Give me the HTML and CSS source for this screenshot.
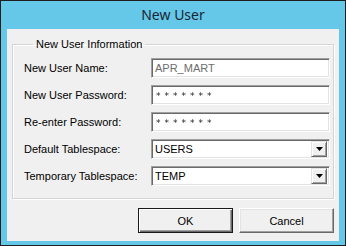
FILE: index.html
```html
<!DOCTYPE html>
<html>
<head>
<meta charset="utf-8">
<link rel="stylesheet" href="styles.css">
</head>
<body>
<div class="window">
  <div class="titlebar">New User</div>
  <div class="client">
    <fieldset class="group">
      <legend class="legend">New User Information</legend>
      <div class="form">
        <div class="label">New User Name:</div>
        <div class="field"><span class="text disabled">APR_MART</span></div>
        <div class="label">New User Password:</div>
        <div class="field"><span class="text stars">*******</span></div>
        <div class="label">Re-enter Password:</div>
        <div class="field"><span class="text stars">*******</span></div>
        <div class="label">Default Tablespace:</div>
        <div class="field combo"><span class="text">USERS</span><span class="dropbtn"><svg width="7" height="4" viewBox="0 0 7 4"><path d="M0 0H7L3.5 4Z" fill="#000"/></svg></span></div>
        <div class="label">Temporary Tablespace:</div>
        <div class="field combo"><span class="text">TEMP</span><span class="dropbtn"><svg width="7" height="4" viewBox="0 0 7 4"><path d="M0 0H7L3.5 4Z" fill="#000"/></svg></span></div>
      </div>
    </fieldset>
    <div class="buttons">
      <div class="btn default">OK</div>
      <div class="btn">Cancel</div>
    </div>
  </div>
</div>
</body>
</html>
```
FILE: styles.css
```css
* { box-sizing: border-box; }
html, body { margin: 0; padding: 0; }
body {
  width: 346px;
  height: 246px;
  overflow: hidden;
  font-family: "Liberation Sans", Arial, sans-serif;
  font-size: 11px;
  color: #000;
}
.window {
  width: 346px;
  height: 246px;
  border: 1px solid #1e1e1e;
  background: #66c8e8;
  padding: 0 6px 4px 6px;
  display: flex;
  flex-direction: column;
}
.titlebar {
  height: 28px;
  line-height: 27px;
  text-align: center;
  font-family: "Noto Sans", sans-serif;
  font-size: 14px;
  color: #1b2535;
}
.client {
  flex: 1;
  background: #f0f0f0;
  display: flex;
  flex-direction: column;
}
.group {
  margin: 9px 5px 0 5px;
  padding: 7px 3px 12px 11px;
  border: 1px solid #d5d5d5;
  box-shadow: 1px 1px 0 #ffffff, inset 1px 1px 0 #ffffff;
  min-width: 0;
}
.legend {
  margin-left: 9px;
  padding: 0 3px;
  line-height: 13px;
  font-size: 11px;
}
.form {
  display: grid;
  grid-template-columns: 127px 1fr;
  grid-auto-rows: 20px;
  row-gap: 7px;
  align-items: center;
}
.label {
  line-height: 13px;
}
.field {
  height: 20px;
  background: #fff;
  border: 1px solid;
  border-color: #a0a0a0 #ffffff #ffffff #a0a0a0;
  box-shadow: inset 1px 1px 0 #696969, inset -1px -1px 0 #e3e3e3;
  display: flex;
  align-items: center;
  padding: 1px 2px 1px 3px;
  position: relative;
}
.text {
  flex: 1;
  line-height: 13px;
}
.disabled { color: #6d6d6d; }
.stars {
  font-family: "DejaVu Sans", sans-serif;
  font-size: 9px;
  letter-spacing: 4px;
  padding-top: 3px;
  padding-left: 1px;
  color: #222;
  will-change: transform;
}
.dropbtn {
  width: 16px;
  height: 16px;
  background: #f0f0f0;
  border: 1px solid;
  border-color: #e3e3e3 #696969 #696969 #e3e3e3;
  box-shadow: inset 1px 1px 0 #ffffff, inset -1px -1px 0 #a0a0a0;
  display: flex;
  align-items: center;
  justify-content: center;
}
.dropbtn svg { display: block; }
.buttons {
  display: flex;
  justify-content: flex-end;
  gap: 6px;
  margin-top: 9px;
  padding-right: 5px;
}
.btn {
  width: 95px;
  height: 25px;
  display: flex;
  align-items: center;
  justify-content: center;
  padding-top: 1px;
  background: #f0f0f0;
  border: 1px solid;
  border-color: #ffffff #696969 #696969 #ffffff;
  box-shadow: inset -1px -1px 0 #a0a0a0, inset 1px 1px 0 #e3e3e3;
}
.btn.default {
  border: 1px solid #1a1a1a;
  box-shadow: inset 1px 1px 0 #ffffff, inset -1px -1px 0 #696969, inset -2px -2px 0 #a0a0a0;
}
```
